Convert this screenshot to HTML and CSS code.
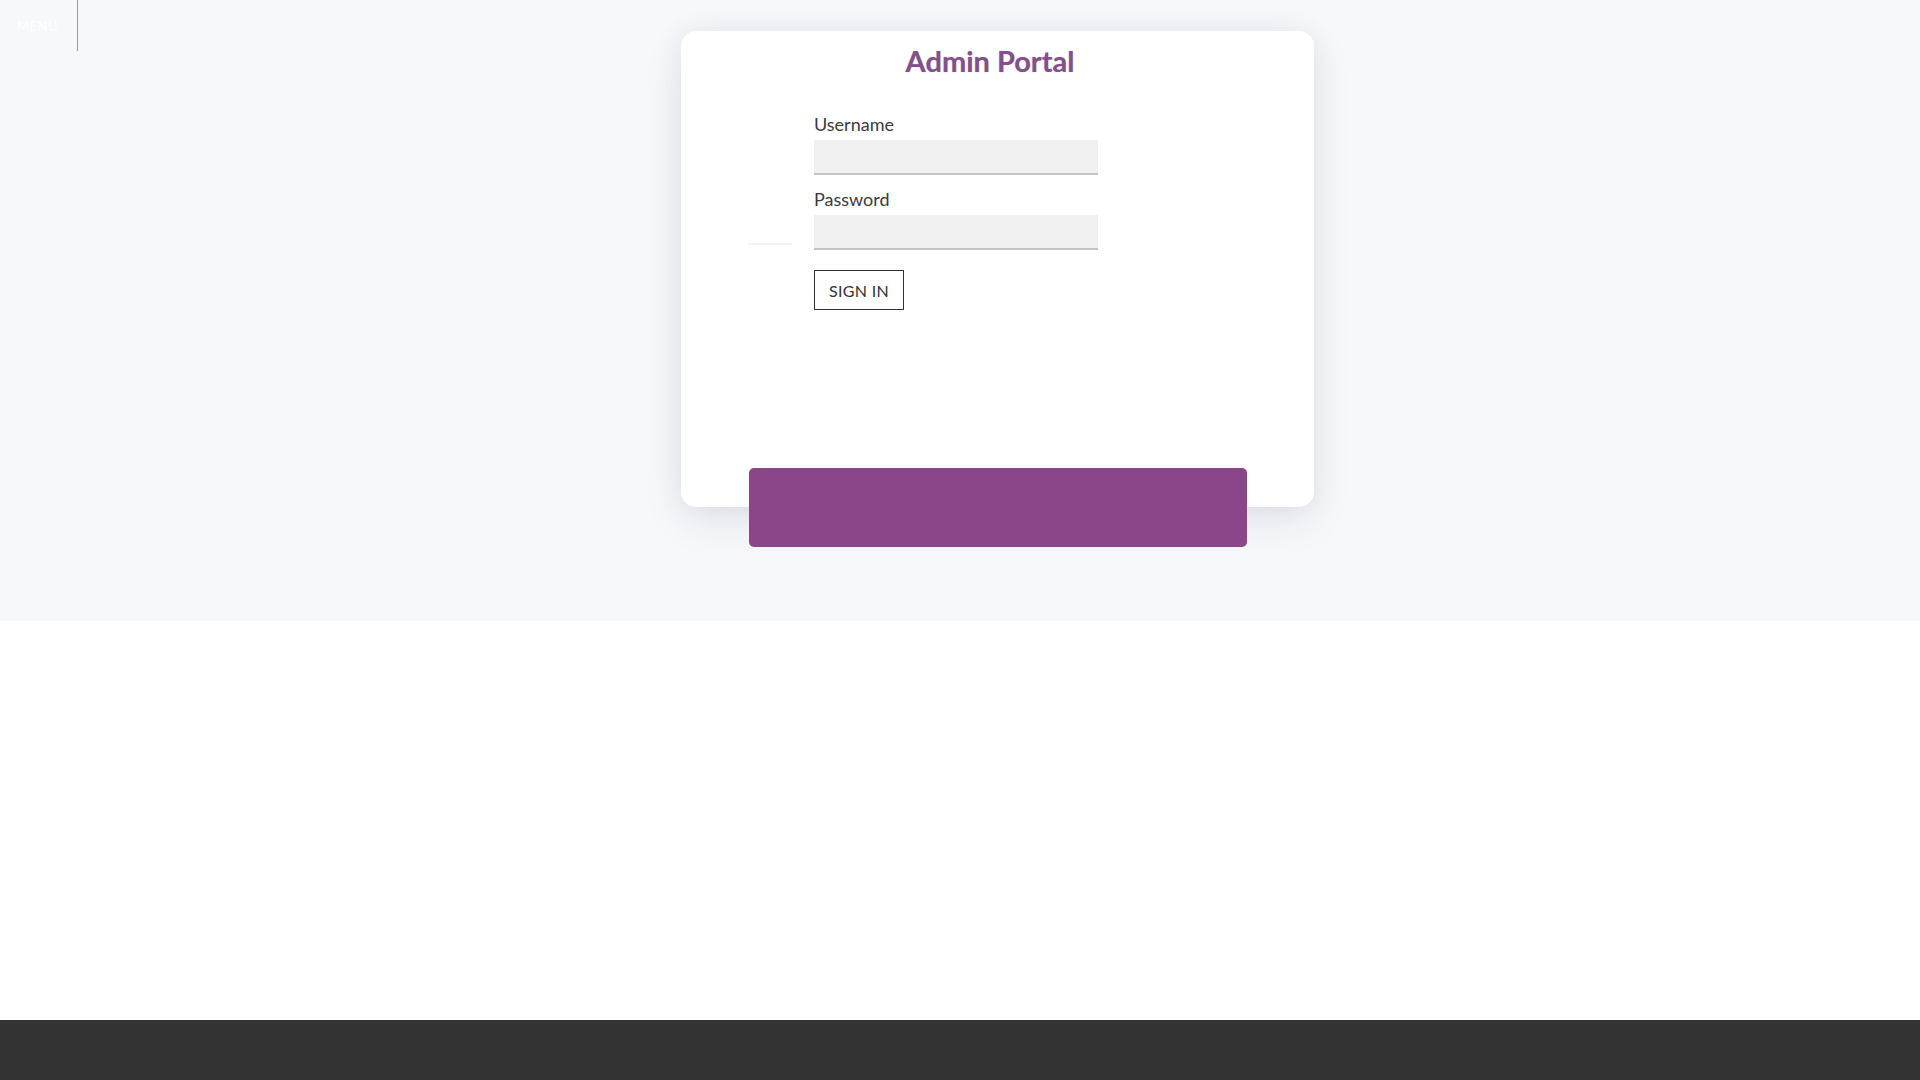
FILE: index.html
```html
<!DOCTYPE html>
<html lang="en">
<head>
<meta charset="utf-8">
<title>Admin Portal</title>
<link rel="stylesheet" href="styles.css">
</head>
<body>
<header class="menu-btn">MENU</header>
<section class="hero">
  <div class="card">
    <h1 class="title">Admin Portal</h1>
    <form class="form">
      <label class="label" for="u">Username</label>
      <input class="field" id="u" type="text">
      <label class="label label-pw" for="p">Password</label>
      <div class="pw-row">
        <span class="ghost"></span>
        <input class="field" id="p" type="password">
      </div>
      <button class="signin" type="button">SIGN IN</button>
    </form>
    <div class="bar"></div>
  </div>
</section>
<main class="blank"></main>
<footer class="footer"></footer>
</body>
</html>
```
FILE: styles.css
```css
html, body {
  margin: 0;
  padding: 0;
}
body {
  font-family: "Lato", "Liberation Sans", sans-serif;
  background: #ffffff;
  color: #333;
}
.menu-btn {
  position: absolute;
  top: 0;
  left: 0;
  width: 60px;
  height: 51px;
  padding-left: 17px;
  box-sizing: content-box;
  border-right: 1px solid #9a9aa0;
  color: #ffffff;
  font-size: 13px;
  letter-spacing: 0.5px;
  line-height: 52px;
  z-index: 2;
}
.hero {
  height: 621px;
  background: #f7f8fc;
  padding-top: 31px;
  box-sizing: border-box;
  padding-left: 681px;
}
.card {
  width: 633px;
  height: 476px;
  background: #ffffff;
  border-radius: 15px;
  box-shadow: 0 14px 40px rgba(40, 40, 60, 0.09), 0 0 30px rgba(40, 40, 60, 0.05);
  display: flex;
  flex-direction: column;
  padding-top: 12px;
  box-sizing: border-box;
}
.title {
  margin: 0;
  padding-right: 15px;
  text-align: center;
  font-family: "Lato", sans-serif;
  font-weight: 700;
  font-size: 29px;
  line-height: 36px;
  color: #83508a;
  text-shadow: 0 0 1px rgba(131, 80, 138, 0.5);
}
.form {
  display: flex;
  flex-direction: column;
  align-items: flex-start;
  padding-left: 133px;
  margin-top: 33px;
}
.label {
  font-size: 18px;
  line-height: 24px;
  color: #3a3a3a;
  margin-bottom: 4px;
}
.label-pw {
  margin-top: 12px;
}
.pw-row {
  position: relative;
}
.ghost {
  position: absolute;
  left: -66px;
  top: 28px;
  width: 44px;
  height: 2px;
  background: #f4f4f4;
}
.field {
  width: 284px;
  height: 35px;
  box-sizing: border-box;
  background: #f0f0f0;
  border: none;
  border-bottom: 2px solid #c4c4c4;
  margin: 0;
  padding: 0 8px;
  font: inherit;
  display: block;
}
.signin {
  margin-top: 20px;
  width: 90px;
  height: 40px;
  background: #ffffff;
  border: 1px solid #333;
  font-family: "Lato", sans-serif;
  font-size: 16px;
  color: #333;
  padding: 0;
  letter-spacing: 0.3px;
}
.bar {
  margin-top: auto;
  margin-bottom: -40px;
  margin-left: 68px;
  width: 498px;
  height: 79px;
  background: #8b4589;
  border-radius: 5px;
}
.blank {
  display: block;
  height: 399px;
  background: #ffffff;
}
.footer {
  height: 60px;
  background: #333333;
}
```
